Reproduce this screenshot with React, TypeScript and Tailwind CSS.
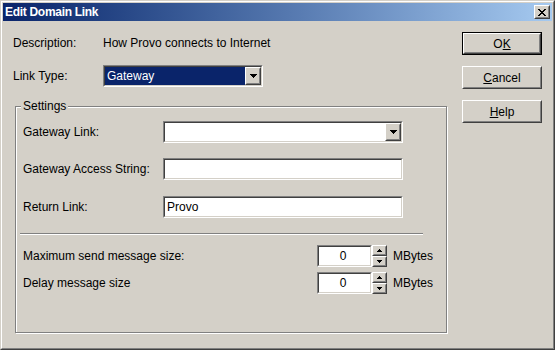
import React from "react";

const FONT = { fontFamily: '"Liberation Sans", Arial, sans-serif' };

function Sunken({ className = "", inner = "", children }: { className?: string; inner?: string; children?: React.ReactNode }) {
  return (
    <div className={`border border-t-[#808080] border-l-[#808080] border-b-white border-r-white ${className}`}>
      <div className={`h-full w-full border border-t-[#404040] border-l-[#404040] border-b-[#d4d0c8] border-r-[#d4d0c8] ${inner}`}>
        {children}
      </div>
    </div>
  );
}

function Raised({ className = "", children }: { className?: string; children?: React.ReactNode }) {
  return (
    <div className={`border border-t-white border-l-white border-b-[#404040] border-r-[#404040] bg-[#d4d0c8] ${className}`}>
      <div className="flex h-full w-full items-center justify-center border border-t-[#d4d0c8] border-l-[#d4d0c8] border-b-[#808080] border-r-[#808080]">
        {children}
      </div>
    </div>
  );
}

function DownTri() {
  return (
    <svg width="7" height="4" viewBox="0 0 7 4" shapeRendering="crispEdges">
      <path d="M0 0h7v1H0zM1 1h5v1H1zM2 2h3v1H2zM3 3h1v1H3z" fill="#000" />
    </svg>
  );
}

function SmallTri({ up }: { up?: boolean }) {
  return (
    <svg width="5" height="3" viewBox="0 0 5 3" shapeRendering="crispEdges">
      {up ? (
        <path d="M2 0h1v1H2zM1 1h3v1H1zM0 2h5v1H0z" fill="#000" />
      ) : (
        <path d="M0 0h5v1H0zM1 1h3v1H1zM2 2h1v1H2z" fill="#000" />
      )}
    </svg>
  );
}

function Combo({ width, selected, text }: { width: string; selected?: boolean; text?: string }) {
  return (
    <Sunken className={`${width} h-[22px]`} inner="flex bg-white">
      <div className={`flex flex-1 items-center pl-[2px] ${selected ? "bg-[#0a246a] text-white" : ""}`}>{text}</div>
      <Raised className="h-full w-[16px]">
        <DownTri />
      </Raised>
    </Sunken>
  );
}

function Spin({ label }: { label: string }) {
  return (
    <div className="flex h-[22px] items-center">
      <div className="w-[294px]">{label}</div>
      <Sunken className="h-[22px] w-[55px]" inner="flex items-center justify-center bg-white pr-[3px]">
        0
      </Sunken>
      <div className="flex h-[22px] w-[15px] flex-col">
        <Raised className="h-[11px] w-[15px]">
          <SmallTri up />
        </Raised>
        <Raised className="h-[11px] w-[15px]">
          <SmallTri />
        </Raised>
      </div>
      <div className="ml-[6px]">MBytes</div>
    </div>
  );
}

export default function App() {
  return (
    <div style={FONT} className="h-[350px] w-[555px] text-[12px] leading-[14px] text-black">
      <div className="h-full w-full border border-t-[#d4d0c8] border-l-[#d4d0c8] border-b-[#404040] border-r-[#404040] bg-[#d4d0c8]">
        <div className="flex h-full w-full flex-col border border-t-white border-l-white border-b-[#808080] border-r-[#808080] p-[1px]">
          {/* Title bar */}
          <div className="flex h-[18px] items-center justify-between bg-gradient-to-r from-[#0a246a] to-[#a6caf0] pl-[2px] pr-[2px]">
            <span className="text-[12px] font-bold tracking-[-0.3px] text-white">Edit Domain Link</span>
            <Raised className="h-[14px] w-[16px]">
              <svg width="8" height="7" viewBox="0 0 8 7" shapeRendering="crispEdges">
                <path d="M0 0h2v1H0zM6 0h2v1H6zM1 1h2v1H1zM5 1h2v1H5zM2 2h4v1H2zM3 3h2v1H3zM2 4h4v1H2zM1 5h2v1H1zM5 5h2v1H5zM0 6h2v1H0zM6 6h2v1H6z" fill="#000" />
              </svg>
            </Raised>
          </div>

          {/* Body */}
          <div className="flex flex-1">
            {/* Left column */}
            <div className="flex w-[449px] flex-col pl-[10px] pt-[11px]">
              <div className="flex h-[22px] items-center">
                <div className="w-[90px]">Description:</div>
                <div>How Provo connects to Internet</div>
              </div>
              <div className="mt-[11px] flex h-[22px] items-center">
                <div className="w-[90px]">Link Type:</div>
                <Combo width="w-[160px]" selected text="Gateway" />
              </div>

              {/* Group box */}
              <div className="relative ml-[2px] mt-[19px] h-[227px] w-[432px] border border-[#808080] shadow-[inset_1px_1px_0_#fff,1px_1px_0_#fff]">
                <span className="absolute left-[5px] top-[-8px] bg-[#d4d0c8] px-[2px]">Settings</span>
                <div className="flex flex-col pl-[7px] pt-[14px]">
                  <div className="flex h-[22px] items-center">
                    <div className="w-[140px]">Gateway Link:</div>
                    <Combo width="w-[240px]" />
                  </div>
                  <div className="mt-[15px] flex h-[22px] items-center">
                    <div className="w-[140px]">Gateway Access String:</div>
                    <Sunken className="h-[22px] w-[240px]" inner="bg-white" />
                  </div>
                  <div className="mt-[16px] flex h-[22px] items-center">
                    <div className="w-[140px]">Return Link:</div>
                    <Sunken className="h-[22px] w-[240px]" inner="flex items-center bg-white pl-[2px]">
                      Provo
                    </Sunken>
                  </div>
                  <div className="ml-[-3px] mt-[15px] h-[2px] w-[403px] border-t border-t-[#808080] border-b border-b-white" />
                  <div className="mt-[10px]">
                    <Spin label="Maximum send message size:" />
                  </div>
                  <div className="mt-[5px]">
                    <Spin label="Delay message size" />
                  </div>
                </div>
              </div>
            </div>

            {/* Right column */}
            <div className="ml-[10px] flex flex-col gap-[11px] pt-[11px]">
              <div className="h-[23px] w-[80px] border border-black">
                <Raised className="h-full w-full">
                  <span>
                    O<u>K</u>
                  </span>
                </Raised>
              </div>
              <Raised className="h-[23px] w-[80px]">
                <span>
                  <u>C</u>ancel
                </span>
              </Raised>
              <Raised className="h-[23px] w-[80px]">
                <span>
                  <u>H</u>elp
                </span>
              </Raised>
            </div>
          </div>
        </div>
      </div>
    </div>
  );
}
